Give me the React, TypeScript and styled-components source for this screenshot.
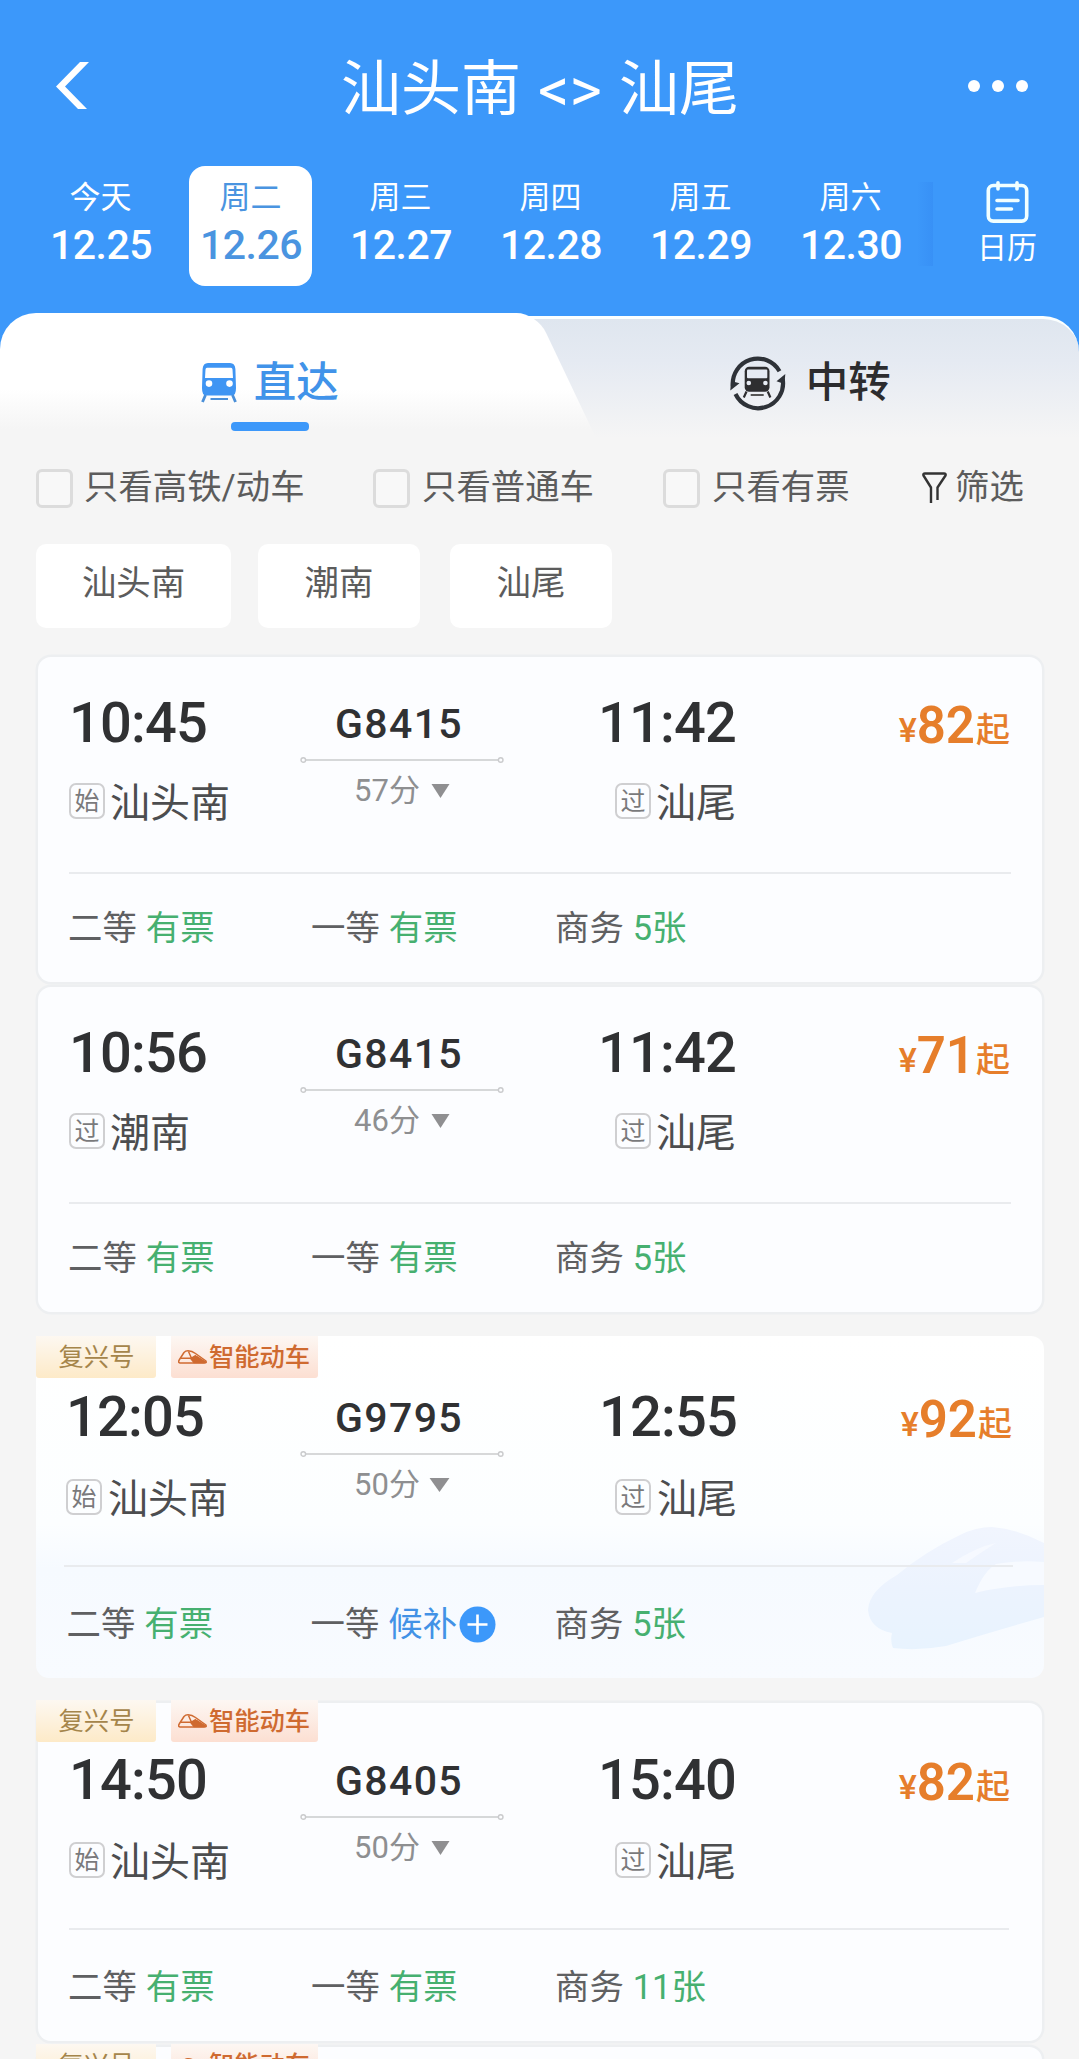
import React from "react";
import styled, { createGlobalStyle } from "styled-components";

const BLUE = "#3c98fa";
const PAGE = "#f5f5f5";

const GlobalStyle = createGlobalStyle`
  * { box-sizing: border-box; }
  body {
    margin: 0;
    background: ${PAGE};
    font-family: Roboto, "Noto Sans CJK SC", sans-serif;
    color: #333;
  }
`;

const Screen = styled.main`
  width: 1079px;
  height: 2059px;
  overflow: hidden;
  background: ${PAGE};
`;

/* ---------- header ---------- */

const Header = styled.header`
  height: 313px;
  background: ${BLUE};
  color: #fff;
`;

const TitleBar = styled.div`
  display: grid;
  grid-template-columns: 200px 1fr 200px;
  align-items: center;
  height: 166px;
  padding: 5px 51px 0 56px;
`;

const Title = styled.h1`
  display: flex;
  justify-content: center;
  gap: 17px;
  margin: 9px 0 0;
  padding-right: 4px;
  font-size: 60px;
  font-weight: 400;
  line-height: 70px;
  white-space: nowrap;
`;

const Swap = styled.span`
  font-size: 62px;
`;

const MoreDots = styled.div`
  display: flex;
  justify-content: flex-end;
  gap: 12px;
`;

const Dot = styled.i`
  width: 12px;
  height: 12px;
  border-radius: 50%;
  background: #fff;
`;

const DateBar = styled.nav`
  display: flex;
  height: 120px;
  padding-left: 25px;
`;

const DayCell = styled.div`
  display: flex;
  flex: 0 0 150px;
  justify-content: center;
`;

const Day = styled.div<{ $active?: boolean }>`
  width: 123px;
  height: 120px;
  padding-top: 10px;
  border-radius: 16px;
  text-align: center;
  white-space: nowrap;
  color: ${(p) => (p.$active ? "#4a94e0" : "#fff")};
  background: ${(p) => (p.$active ? "#fff" : "transparent")};
`;

const Weekday = styled.div`
  font-size: 31px;
  line-height: 44px;
  padding-left: 1px;
`;

const DateText = styled.div`
  font-size: 41px;
  font-weight: 500;
  line-height: 46px;
  letter-spacing: -0.5px;
  margin: 2px 0 0 2px;
`;

const CalendarButton = styled.div`
  display: flex;
  flex: 1;
  flex-direction: column;
  align-items: center;
  margin-left: 2px;
  padding-top: 15px;
  font-size: 30px;
  line-height: 40px;
  gap: 5px;
`;

const DateEdge = styled.i`
  width: 16px;
  height: 84px;
  margin: 16px 0 0 -8px;
  background: linear-gradient(90deg, rgba(40, 110, 230, 0), rgba(40, 115, 230, 0.2));
`;

/* ---------- tabs ---------- */

const TabBar = styled.div`
  position: relative;
  display: flex;
  height: 125px;
  background: ${BLUE};
  &::before {
    content: "";
    position: absolute;
    inset: 3px 0 0 200px;
    border-top: 3px solid #fbffff;
    border-radius: 0 36px 0 0;
    background: linear-gradient(#dfe6ef, #e5eaf2 35%, ${PAGE} 100%);
  }
`;

const fade = `linear-gradient(#fff 0, #fff 76px, ${PAGE} 116px)`;

const Tab = styled.div<{ $active?: boolean }>`
  position: relative;
  display: flex;
  flex: 1;
  flex-direction: column;
  align-items: center;
  font-size: 42.5px;
  font-weight: 500;
  color: ${(p) => (p.$active ? "#4193e9" : "#2c2c2e")};
  ${(p) =>
    p.$active &&
    `
    &::before {
      content: "";
      position: absolute;
      inset: 0 80px 0 0;
      border-radius: 36px 0 0 0;
      background: ${fade};
    }
    &::after {
      content: "";
      position: absolute;
      top: 0;
      bottom: 0;
      left: 400px;
      right: -56px;
      border-radius: 0 20px 0 0;
      background: ${fade};
      transform: skewX(25.4deg);
      transform-origin: 100% 100%;
    }
  `}
`;

const TabLabel = styled.div<{ $gap: number; $dx?: number }>`
  position: relative;
  z-index: 1;
  display: flex;
  align-items: center;
  gap: ${(p) => p.$gap}px;
  height: 60px;
  margin: 40px 0 0 ${(p) => p.$dx ?? 0}px;
`;

const TabText = styled.span`
  line-height: 52px;
`;

const TabUnderline = styled.i`
  z-index: 1;
  width: 78px;
  height: 9px;
  margin-top: 9px;
  border-radius: 4px;
  background: ${BLUE};
`;

/* ---------- filters ---------- */

const Filters = styled.div`
  display: grid;
  grid-template-columns: 337px 290px 259px auto;
  align-items: center;
  height: 64px;
  margin-top: 18px;
  padding-left: 36px;
  font-size: 34.4px;
  color: #5c5c5c;
  white-space: nowrap;
`;

const Check = styled.label<{ $gap: number }>`
  display: flex;
  align-items: center;
  gap: ${(p) => p.$gap}px;
`;

const Box = styled.i`
  width: 37px;
  height: 39px;
  margin-top: 1px;
  border: 3px solid #dcdcdc;
  border-radius: 6px;
  background: #f8f8f8;
`;

const FilterText = styled.span`
  line-height: 44px;
  margin-top: -2px;
`;

const Chips = styled.div`
  display: flex;
  margin: 24px 0 29px;
  padding-left: 36px;
`;

const Chip = styled.span<{ $w: number; $ml?: number }>`
  width: ${(p) => p.$w}px;
  height: 84px;
  margin-left: ${(p) => p.$ml ?? 0}px;
  border-radius: 10px;
  background: #fff;
  font-size: 34.4px;
  line-height: 79px;
  text-align: center;
  color: #5c5c5c;
`;

/* ---------- train cards ---------- */

type Variant = "plain" | "tagged" | "smart";

const Card = styled.article<{ $v: Variant; $h: number; $mt?: number }>`
  position: relative;
  isolation: isolate;
  height: ${(p) => p.$h}px;
  margin: ${(p) => p.$mt ?? 0}px ${(p) => (p.$v === "smart" ? "35px 0 36px" : "37px 0 38px")};
  border-radius: 13px;
  background: ${(p) =>
    p.$v === "smart" ? "linear-gradient(#fff 0, #fcfeff 55%, #f6faff 68%, #f8fbff 100%)" : "#fcfdff"};
  box-shadow: ${(p) => (p.$v === "smart" ? "none" : "0 0 0 2.5px #edeff1")};
`;

const Tags = styled.div<{ $v: Variant }>`
  position: absolute;
  top: ${(p) => (p.$v === "smart" ? 0 : -3)}px;
  left: ${(p) => (p.$v === "smart" ? 0 : -2)}px;
  display: flex;
  gap: 15px;
`;

const Tag = styled.span<{ $smart?: boolean }>`
  display: flex;
  align-items: center;
  justify-content: center;
  gap: 2px;
  width: ${(p) => (p.$smart ? 147 : 120)}px;
  height: 42px;
  padding: ${(p) => (p.$smart ? "0 1px 0 0" : "0 0 0 1px")};
  border-radius: 0 0 3px 3px;
  font-size: 25.3px;
  line-height: 43px;
  white-space: nowrap;
  color: ${(p) => (p.$smart ? "#cf6a30" : "#a5854a")};
  font-weight: ${(p) => (p.$smart ? 500 : 400)};
  background: ${(p) =>
    p.$smart ? "linear-gradient(#fdf7f3, #fcdfd2)" : "linear-gradient(#fdf8f1, #fdeac8)"};
`;

const Trip = styled.div<{ $v: Variant }>`
  display: grid;
  grid-template-columns: 231px 204px 232px 1fr;
  height: ${(p) => (p.$v === "plain" ? 215 : p.$v === "smart" ? 229 : 225)}px;
  margin: 0 32px 0 ${(p) => (p.$v === "smart" ? 33 : 31)}px;
  padding-top: ${(p) => (p.$v === "plain" ? 34 : p.$v === "smart" ? 49 : 45)}px;
`;

const Stop = styled.div<{ $right?: boolean; $dx?: number }>`
  display: flex;
  flex-direction: column;
  align-items: ${(p) => (p.$right ? "flex-end" : "flex-start")};
  transform: translateX(${(p) => p.$dx ?? 0}px);
`;

const Time = styled.div`
  font-size: 56px;
  font-weight: 500;
  line-height: 64px;
  letter-spacing: -0.8px;
  color: #303133;
`;

const Station = styled.div<{ $v: Variant }>`
  display: flex;
  align-items: center;
  gap: ${(p) => (p.$v === "smart" ? 6 : 5)}px;
  height: 49px;
  margin-top: ${(p) => (p.$v === "plain" ? 22 : 24)}px;
  font-size: 40px;
  line-height: 49px;
  color: #4c4d4f;
  white-space: nowrap;
`;

const StationName = styled.span`
  margin-top: 3px;
`;

const StopBadge = styled.span`
  display: inline-block;
  width: 36px;
  height: 36px;
  margin-top: -1px;
  border: 2px solid #cfcfd1;
  border-radius: 7px;
  font-size: 25px;
  line-height: 34px;
  text-align: center;
  color: #7a7a7c;
`;

const Middle = styled.div`
  display: flex;
  flex-direction: column;
  align-items: center;
  padding-top: 8px;
`;

const TrainNo = styled.div`
  font-size: 41px;
  font-weight: 500;
  letter-spacing: 1.4px;
  line-height: 51px;
  margin-left: -6px;
  color: #303133;
`;

const RouteLineSvg = styled.svg`
  margin-top: 6px;
`;

const Duration = styled.div<{ $gap: number }>`
  display: flex;
  align-items: center;
  gap: ${(p) => p.$gap}px;
  margin-top: 9px;
  font-size: 31px;
  line-height: 36px;
  color: #8e8f91;
`;

const Price = styled.div`
  display: flex;
  align-items: baseline;
  justify-content: flex-end;
  color: #e67e2b;
  font-size: 34px;
  font-weight: 500;
  line-height: 70px;
`;

const PriceUnit = styled.span<{ $size: number }>`
  font-size: ${(p) => p.$size}px;
  transform: translateY(-1.5px);
`;

const Amount = styled.b`
  font-size: 51px;
  font-weight: 600;
  margin: 0 1px 0 0;
`;

const Seats = styled.div<{ $v: Variant }>`
  display: grid;
  grid-template-columns: ${(p) => (p.$v === "smart" ? 244 : 243)}px 244px auto;
  margin: 0 ${(p) => (p.$v === "tagged" ? 33 : 31)}px 0 ${(p) => (p.$v === "smart" ? 28 : 31)}px;
  padding: ${(p) => (p.$v === "plain" ? 32 : 35)}px 0 0 ${(p) => (p.$v === "smart" ? 3.5 : 0)}px;
  border-top: 2px solid #e9ebee;
  font-size: 34.4px;
  line-height: 44px;
  color: #5f6062;
  white-space: nowrap;
`;

const Seat = styled.div`
  display: flex;
  align-items: center;
  gap: 9px;
  margin-left: -1px;
`;

const Left = styled.span<{ $wait?: boolean }>`
  display: flex;
  align-items: center;
  gap: 2px;
  color: ${(p) => (p.$wait ? "#4292e6" : "#46b070")};
`;

const TrainMark = styled.svg`
  position: absolute;
  z-index: -1;
  right: 0;
  bottom: 27px;
`;

/* ---------- drawings ---------- */

const BackIcon = () => (
  <svg width="34" height="48" viewBox="0 0 34 48">
    <path d="M33 0H24L0 24.5L22 47H31L9 24.5Z" fill="#fff" />
  </svg>
);

const CalendarIcon = () => (
  <svg width="43" height="42" viewBox="0 0 42 42" fill="none" stroke="#f1ffff" strokeWidth="3.6" strokeLinecap="round">
    <rect x="1.8" y="4.5" width="38.4" height="35.6" rx="5" />
    <path d="M11.5 1.8V8M30.5 1.8V8M10.5 19.5H31.5M10.5 28H25" />
  </svg>
);

const TrainIcon = () => (
  <svg width="36" height="40" viewBox="0 0 36 40">
    <path
      fillRule="evenodd"
      fill="#3f95f3"
      d="M7 0H29Q34 0 34.4 6L35 25Q35 32.500 31 32.500H5Q1 32.500 1 25L1.600 6Q2 0 7 0ZM6 4.800Q4.600 4.800 4.500 6.500L4 15H32L31.500 6.500Q31.400 4.800 30 4.800ZM8 17.300a3.300 3.300 0 1 0 0 6.600a3.300 3.300 0 1 0 0-6.600ZM28.500 17.300a3.300 3.300 0 1 0 0 6.600a3.300 3.300 0 1 0 0-6.600Z"
    />
    <path d="M4.500 32L1.500 39M31.500 32L34.500 39" stroke="#4a8fd8" strokeWidth="2.800" />
    <path d="M9.500 36H27" stroke="#4a8fd8" strokeWidth="2" />
  </svg>
);

const TransferIcon = () => (
  <svg width="56" height="56" viewBox="0 0 56 56">
    <g fill="none" stroke="#2e3238" strokeWidth="4.200">
      <path d="M2.900 31A25 25 0 0 1 49.500 16.200" />
      <path d="M52.700 24A25 25 0 0 1 5.500 39" />
    </g>
    <path d="M0.300 35.500L1 26L9.500 28.300Z M55.300 19L54.500 29L46.500 26.300Z" fill="#2e3238" />
    <rect x="14.700" y="11.700" width="24.800" height="25" rx="4.500" fill="#2e2e30" />
    <rect x="17" y="14.500" width="20.300" height="8.800" rx="1" fill="#e6ebf3" />
    <circle cx="18.800" cy="28" r="2.300" fill="#e8ecf4" />
    <circle cx="35.400" cy="28" r="2.300" fill="#e8ecf4" />
    <path d="M16.500 36.500L13.800 42.500M37.700 36.500L40.400 42.500" stroke="#2e2e30" strokeWidth="2.200" />
    <path d="M20.700 40H33.700" stroke="#555" strokeWidth="2" />
  </svg>
);

const FunnelIcon = () => (
  <svg width="25" height="32" viewBox="0 0 25 32" fill="none" stroke="#333" strokeWidth="2.400">
    <path d="M9 31V15.500L1.500 3.500Q0.800 1.500 3 1.500H22Q24.200 1.500 23.500 3.500L15.500 15.500V28" strokeLinejoin="round" />
  </svg>
);

const RouteLine = () => (
  <RouteLineSvg width="204" height="8" viewBox="0 0 204 8" fill="none" stroke="#cacbcd" strokeWidth="1.400">
    <path d="M6 4H198" />
    <circle cx="3.300" cy="4" r="2.300" />
    <circle cx="200.700" cy="4" r="2.300" />
  </RouteLineSvg>
);

const Caret = ({ wide }: { wide?: boolean }) => (
  <svg width={wide ? 21 : 19} height="14" viewBox="0 0 19 14" preserveAspectRatio="none">
    <path d="M0.500 0H18.500L9.500 14Z" fill="#8f8f91" />
  </svg>
);

const BulletIcon = () => (
  <svg width="29" height="14" viewBox="0 0 29 14" fill="none" stroke="#cf6a30" strokeWidth="1.500" strokeLinejoin="round">
    <path d="M2 13Q-0.500 12.500 1.500 9.500L6 2.500Q7.500 0.800 10 0.800Q14 0.800 17.500 3.500L28 11Q28.500 13 26 13Z" />
    <path d="M3 8.200H13.500L10.500 1.500M13.500 8.200L18 5.500" />
    <path d="M13 8.800L18.500 6.500L28 12.500H16Z" fill="#cf6a30" />
  </svg>
);

const PlusIcon = () => (
  <svg width="37" height="37" viewBox="0 0 37 37">
    <circle cx="18.500" cy="18.500" r="18" fill={BLUE} />
    <path d="M18.500 8.500V28.500M8.500 18.500H28.500" stroke="#fff" strokeWidth="2.600" />
  </svg>
);

const CardTrain = () => (
  <TrainMark width="176" height="126" viewBox="0 0 176 126">
    <defs>
      <linearGradient id="hull" x1="0" y1="0" x2="0" y2="1">
        <stop offset="0" stopColor="#f1f5fe" />
        <stop offset="0.5" stopColor="#ecf3fe" />
        <stop offset="1" stopColor="#e8f3fe" />
      </linearGradient>
    </defs>
    <path
      d="M0 85Q1 66 29 50Q58 26 92 10Q108 2 124 2Q150 4 176 18V92Q120 108 78 121Q50 126 25 123Q22 116 24 108Q2 104 0 85Z"
      fill="url(#hull)"
    />
    <path d="M107 68Q116 46 128 39Q150 35 176 37V60Q140 60 107 68Z" fill="#f7faff" />
    <path d="M84 38Q108 22 128 18Q112 28 98 38Z" fill="#f6f9ff" />
  </TrainMark>
);

/* ---------- data ---------- */

const days = [
  ["今天", "12.25"],
  ["周二", "12.26"],
  ["周三", "12.27"],
  ["周四", "12.28"],
  ["周五", "12.29"],
  ["周六", "12.30"],
];

type Train = {
  v: Variant;
  h: number;
  mt?: number;
  dep: string;
  arr: string;
  no: string;
  mins: string;
  mark: string;
  from: string;
  price: string;
  first: string;
  biz: string;
};

const trains: Train[] = [
  { v: "plain", h: 325, dep: "10:45", arr: "11:42", no: "G8415", mins: "57分", mark: "始", from: "汕头南", price: "82", first: "有票", biz: "5张" },
  { v: "plain", h: 325, mt: 5, dep: "10:56", arr: "11:42", no: "G8415", mins: "46分", mark: "过", from: "潮南", price: "71", first: "有票", biz: "5张" },
  { v: "smart", h: 342, mt: 24, dep: "12:05", arr: "12:55", no: "G9795", mins: "50分", mark: "始", from: "汕头南", price: "92", first: "候补", biz: "5张" },
  { v: "tagged", h: 338, mt: 25, dep: "14:50", arr: "15:40", no: "G8405", mins: "50分", mark: "始", from: "汕头南", price: "82", first: "有票", biz: "11张" },
];

const CardTags = ({ v }: { v: Variant }) => (
  <Tags $v={v}>
    <Tag>复兴号</Tag>
    <Tag $smart>
      <BulletIcon />
      智能动车
    </Tag>
  </Tags>
);

const TrainCard = ({ t }: { t: Train }) => (
  <Card $v={t.v} $h={t.h} $mt={t.mt}>
    {t.v === "smart" && <CardTrain />}
    {t.v !== "plain" && <CardTags v={t.v} />}
    <Trip $v={t.v}>
      <Stop $dx={t.v === "smart" ? -3 : 0}>
        <Time>{t.dep}</Time>
        <Station $v={t.v}>
          <StopBadge>{t.mark}</StopBadge>
          <StationName>{t.from}</StationName>
        </Station>
      </Stop>
      <Middle>
        <TrainNo>{t.no}</TrainNo>
        <RouteLine />
        <Duration $gap={t.v === "smart" ? 9 : 11}>
          {t.mins}
          <Caret wide={t.v === "smart"} />
        </Duration>
      </Middle>
      <Stop $right $dx={t.v === "smart" ? 1 : 0}>
        <Time>{t.arr}</Time>
        <Station $v={t.v}>
          <StopBadge>过</StopBadge>
          <StationName>汕尾</StationName>
        </Station>
      </Stop>
      <Price>
        <PriceUnit $size={34}>¥</PriceUnit>
        <Amount>{t.price}</Amount>
        <PriceUnit $size={34}>起</PriceUnit>
      </Price>
    </Trip>
    <Seats $v={t.v}>
      <Seat>
        二等<Left>有票</Left>
      </Seat>
      <Seat>
        一等
        <Left $wait={t.first === "候补"}>
          {t.first}
          {t.first === "候补" && <PlusIcon />}
        </Left>
      </Seat>
      <Seat>
        商务<Left>{t.biz}</Left>
      </Seat>
    </Seats>
  </Card>
);

export default function App() {
  return (
    <Screen>
      <GlobalStyle />
      <Header>
        <TitleBar>
          <BackIcon />
          <Title>
            <span>汕头南</span>
            <Swap>&lt;&gt;</Swap>
            <span>汕尾</span>
          </Title>
          <MoreDots>
            <Dot />
            <Dot />
            <Dot />
          </MoreDots>
        </TitleBar>
        <DateBar>
          {days.map(([w, d], i) => (
            <DayCell key={d}>
              <Day $active={i === 1}>
                <Weekday>{w}</Weekday>
                <DateText>{d}</DateText>
              </Day>
            </DayCell>
          ))}
          <DateEdge />
          <CalendarButton>
            <CalendarIcon />
            日历
          </CalendarButton>
        </DateBar>
      </Header>
      <TabBar>
        <Tab $active>
          <TabLabel $gap={17}>
            <TrainIcon />
            <TabText>直达</TabText>
          </TabLabel>
          <TabUnderline />
        </Tab>
        <Tab>
          <TabLabel $gap={20} $dx={2}>
            <TransferIcon />
            <TabText>中转</TabText>
          </TabLabel>
        </Tab>
      </TabBar>
      <Filters>
        <Check $gap={11}>
          <Box />
          <FilterText>只看高铁/动车</FilterText>
        </Check>
        <Check $gap={12}>
          <Box />
          <FilterText>只看普通车</FilterText>
        </Check>
        <Check $gap={12}>
          <Box />
          <FilterText>只看有票</FilterText>
        </Check>
        <Check $gap={8}>
          <FunnelIcon />
          <FilterText>筛选</FilterText>
        </Check>
      </Filters>
      <Chips>
        <Chip $w={195}>汕头南</Chip>
        <Chip $w={162} $ml={27}>
          潮南
        </Chip>
        <Chip $w={162} $ml={30}>
          汕尾
        </Chip>
      </Chips>
      {trains.map((t) => (
        <TrainCard key={t.dep} t={t} />
      ))}
      <Card $v="tagged" $h={338} $mt={6}>
        <CardTags v="tagged" />
      </Card>
    </Screen>
  );
}
